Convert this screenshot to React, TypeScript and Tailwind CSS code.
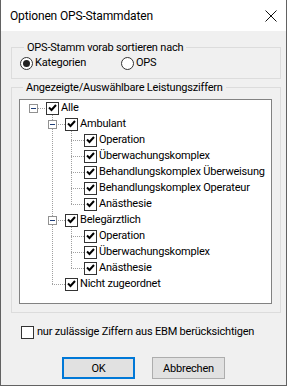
import React from "react";

type Node = { label: string; level: number; expander?: boolean };

const rows: Node[] = [
  { label: "Alle", level: 0, expander: true },
  { label: "Ambulant", level: 1, expander: true },
  { label: "Operation", level: 2 },
  { label: "Überwachungskomplex", level: 2 },
  { label: "Behandlungskomplex Überweisung", level: 2 },
  { label: "Behandlungskomplex Operateur", level: 2 },
  { label: "Anästhesie", level: 2 },
  { label: "Belegärztlich", level: 1, expander: true },
  { label: "Operation", level: 2 },
  { label: "Überwachungskomplex", level: 2 },
  { label: "Anästhesie", level: 2 },
  { label: "Nicht zugeordnet", level: 1 },
];

const font = { fontFamily: 'Roboto, "Liberation Sans", sans-serif' };

function CheckMark() {
  return (
    <svg width="9" height="8" viewBox="0 0 9 8">
      <path d="M1 3.5 L3.5 6 L8 1" fill="none" stroke="#000" strokeWidth="2" />
    </svg>
  );
}

function TreeCheck() {
  return (
    <span className="flex h-[13px] w-[13px] shrink-0 items-center justify-center border border-[#333] bg-white">
      <CheckMark />
    </span>
  );
}

function Expander() {
  return (
    <span className="flex h-[9px] w-[9px] shrink-0 items-center justify-center border border-[#919191] bg-white">
      <span className="h-px w-[5px] bg-[#1f3e78]" />
    </span>
  );
}

// dotted connector lines behind the rows
function TreeLines() {
  const y = (i: number) => 8.5 + 16 * i;
  const dash = { stroke: "#a0a0a0", strokeDasharray: "1 1", strokeWidth: 1, shapeRendering: "crispEdges" as const };
  const h = (i: number, x1: number, x2: number) => <line key={`h${i}-${x1}`} x1={x1} y1={y(i)} x2={x2} y2={y(i)} {...dash} />;
  return (
    <svg className="absolute left-0 top-0" width="251" height="203">
      {h(0, 18, 26)}
      <line x1="32.5" y1="15" x2="32.5" y2={y(11)} {...dash} />
      {h(1, 32, 45)}
      {h(7, 32, 45)}
      {h(11, 32, 45)}
      <line x1="51.5" y1="31" x2="51.5" y2={y(6)} {...dash} />
      {[2, 3, 4, 5, 6].map((i) => h(i, 51, 64))}
      <line x1="51.5" y1="127" x2="51.5" y2={y(10)} {...dash} />
      {[8, 9, 10].map((i) => h(i, 51, 64))}
    </svg>
  );
}

function Radio({ checked, label }: { checked?: boolean; label: string }) {
  return (
    <label className="flex items-center gap-[2px]">
      <span className="flex h-[13px] w-[13px] items-center justify-center rounded-full border border-[#333] bg-white">
        {checked && <span className="h-[7px] w-[7px] rounded-full bg-[#222]" />}
      </span>
      <span>{label}</span>
    </label>
  );
}

export default function App() {
  return (
    <div
      className="flex h-[386px] w-[287px] flex-col border-x border-b border-[#626262] bg-[#f0f0f0] text-[11px] leading-[16px] tracking-[-0.2px] text-black"
      style={font}
    >
      <div className="flex h-[31px] shrink-0 items-center justify-between bg-white pl-[9px] pr-[9px] text-[12px] tracking-[-0.15px]">
        <span>Optionen OPS-Stammdaten</span>
        <svg width="12" height="12" viewBox="0 0 12 12">
          <path d="M0.5 0.5 L11.5 11.5 M11.5 0.5 L0.5 11.5" stroke="#111" strokeWidth="1" />
        </svg>
      </div>

      <div className="flex flex-col pl-[10px] pr-[5px]">
        <fieldset className="mt-[9px] min-w-0 border border-[#dcdcdc] pb-[7px] pl-[8px]">
          <legend className="ml-[4px] px-[3px] leading-[15px]">OPS-Stamm vorab sortieren nach</legend>
          <div className="flex h-[16px] items-center">
            <div className="w-[101px]">
              <Radio checked label="Kategorien" />
            </div>
            <Radio label="OPS" />
          </div>
        </fieldset>

        <fieldset className="mt-[1px] min-w-0 border border-[#dcdcdc] pb-[8px] pl-[7px] pr-[8px]">
          <legend className="ml-[4px] px-[3px] leading-[15px]">Angezeigte/Auswählbare Leistungsziffern</legend>
          <div className="relative mt-[4px] h-[205px] border border-[#828282] bg-white">
            <TreeLines />
            <div className="relative flex flex-col">
              {rows.map((r, i) => (
                <div
                  key={i}
                  className="flex h-[16px] items-center whitespace-nowrap"
                  style={{ paddingLeft: 9 + 19 * r.level }}
                >
                  <span className="flex w-[9px] shrink-0 justify-center">{r.expander && <Expander />}</span>
                  <span className="ml-[8px]">
                    <TreeCheck />
                  </span>
                  <span className="ml-[2px]">{r.label}</span>
                </div>
              ))}
            </div>
          </div>
        </fieldset>

        <label className="ml-[10px] mt-[11px] flex h-[16px] items-center gap-[3px] whitespace-nowrap">
          <span className="h-[13px] w-[13px] border border-[#333] bg-white" />
          <span>nur zulässige Ziffern aus EBM berücksichtigen</span>
        </label>
      </div>

      <div className="mt-[17px] flex justify-center gap-[17px]">
        <button className="h-[22px] w-[73px] border-2 border-[#0078d7] bg-[#e1e1e1] leading-none">OK</button>
        <button className="h-[22px] w-[73px] border border-[#adadad] bg-[#e1e1e1] leading-none">Abbrechen</button>
      </div>
    </div>
  );
}
